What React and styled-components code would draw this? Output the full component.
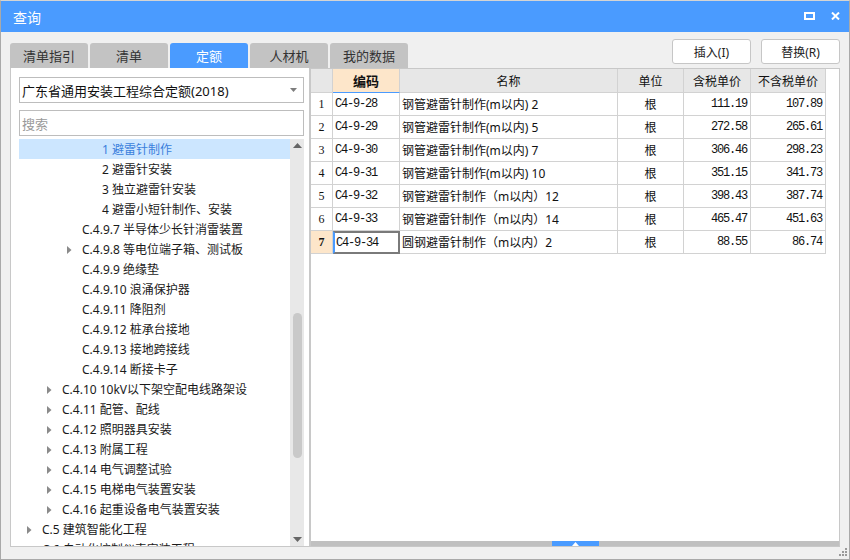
import React from "react"
import styled, { createGlobalStyle, css } from "styled-components"

const GlobalStyle = createGlobalStyle`
    html, body {
        margin: 0;
        padding: 0;
        background: #ffffff;
    }
    body {
        font-family: "Noto Sans", "Noto Sans CJK SC", sans-serif;
    }
    * {
        box-sizing: border-box;
    }
`

const BLUE = "#4a9bff"
const CJK = `"Noto Sans", "Noto Sans CJK SC", sans-serif`
const MONO = `"Liberation Mono", "Noto Sans CJK SC", monospace`

const Window = styled.div`
    width: 850px;
    height: 560px;
    border: 1px solid #a9a9a9;
    border-top-color: #d4d4d4;
    background: #f0f0f0;
    display: flex;
    flex-direction: column;
    overflow: hidden;
`

const TitleBar = styled.div`
    height: 31px;
    flex-shrink: 0;
    background: ${BLUE};
    display: flex;
    align-items: center;
    justify-content: space-between;
    padding: 0 9px 0 12px;
    color: #fff;
    font-family: ${CJK};
    font-size: 14px;
`

const TitleIcons = styled.div`
    display: flex;
    align-items: center;
    gap: 16px;
    margin-top: -1px;
`

const Toolbar = styled.div`
    height: 36px;
    flex-shrink: 0;
    display: flex;
    justify-content: space-between;
    padding: 0 9px;
`

const Tabs = styled.div`
    display: flex;
    align-self: flex-end;
    gap: 2px;
`

const Tab = styled.div`
    width: 78px;
    height: 25px;
    border-radius: 3px 3px 0 0;
    background: ${p => (p.$active ? BLUE : "#c3c3c3")};
    color: ${p => (p.$active ? "#fff" : "#333")};
    font-family: ${CJK};
    font-size: 13px;
    display: flex;
    align-items: center;
    justify-content: center;
`

const Actions = styled.div`
    display: flex;
    gap: 10px;
    margin-top: 7px;
`

const ActionButton = styled.div`
    width: 79px;
    height: 25px;
    border: 1px solid #c6c6c6;
    border-radius: 3px;
    background: #fff;
    color: #222;
    font-family: ${CJK};
    font-size: 12px;
    display: flex;
    align-items: center;
    justify-content: center;
`

const Main = styled.div`
    height: 479px;
    flex-shrink: 0;
    display: flex;
    padding: 0 9px;
`

const LeftPanel = styled.div`
    width: 300px;
    background: #fff;
    border: 1px solid #c8c8c8;
    border-top: none;
    display: flex;
    flex-direction: column;
    padding: 9px 5px 0 8px;
`

const Select = styled.div`
    height: 26px;
    flex-shrink: 0;
    border: 1px solid #bdbdbd;
    display: flex;
    align-items: center;
    justify-content: space-between;
    padding: 0 6px 0 2px;
    font-family: ${CJK};
    font-size: 13px;
    color: #111;
`

const SearchBox = styled.div`
    height: 26px;
    flex-shrink: 0;
    margin-top: 7px;
    border: 1px solid #bdbdbd;
    display: flex;
    align-items: center;
    padding: 0 2px;
    font-family: ${CJK};
    font-size: 13px;
    color: #9a9a9a;
`

const TreeWrap = styled.div`
    flex: 1;
    min-height: 0;
    margin-top: 3px;
    display: flex;
`

const TreeList = styled.div`
    flex: 1;
    overflow: hidden;
`

const TreeRow = styled.div`
    height: 20px;
    display: flex;
    align-items: flex-start;
    padding-top: 2px;
    padding-left: ${p => 8 + p.$level * 20}px;
    background: ${p => (p.$selected ? "#cce6ff" : "transparent")};
    color: ${p => (p.$selected ? "#3a7fdc" : "#1a1a1a")};
    font-family: ${CJK};
    font-size: 12px;
    line-height: 18px;
    white-space: nowrap;
`

const Caret = styled.span`
    width: 15px;
    height: 18px;
    flex-shrink: 0;
    display: flex;
    align-items: center;
`

const ScrollBar = styled.div`
    width: 14px;
    background: #e8e8e8;
    display: flex;
    flex-direction: column;
    align-items: center;
`

const ScrollArrow = styled.div`
    height: 13px;
    flex-shrink: 0;
    display: flex;
    align-items: center;
    justify-content: center;
`

const ScrollTrack = styled.div`
    flex: 1;
    width: 100%;
    display: flex;
    justify-content: center;
`

const ScrollThumb = styled.div`
    width: 9px;
    border-radius: 5px;
    background: #c9c9c9;
`

const RightPanel = styled.div`
    width: 530px;
    background: #fff;
    border: 1px solid #c8c8c8;
    display: flex;
    flex-direction: column;
`

const TableArea = styled.div`
    flex: 1;
`

const COLS = "22px 67px 218px 66px 67px 75px"

const GridRow = styled.div`
    display: grid;
    grid-template-columns: ${COLS};
    width: 515px;
    height: ${p => (p.$head ? 24 : 23)}px;
`

const Cell = styled.div`
    border-right: 1px solid #d2d2d2;
    border-bottom: 1px solid #d2d2d2;
    display: flex;
    align-items: center;
    overflow: hidden;
    white-space: nowrap;
    color: #111;
    justify-content: ${p => p.$align || "flex-start"};
    padding: ${p => (p.$align === "flex-end" ? "0 3px 0 0" : p.$align === "center" ? "0" : "0 0 0 2px")};
    ${p => p.$kind === "mono" && css`
        font-family: ${MONO};
        font-size: 12px;
        letter-spacing: -1.2px;
    `}
    ${p => p.$kind === "text" && css`
        font-family: ${CJK};
        font-size: 12px;
    `}
`

const HeadCell = styled(Cell)`
    background: ${p => (p.$hot ? "#fde6ca" : "#e7e7e7")};
    font-family: ${CJK};
    font-size: ${p => (p.$hot ? 13 : 12)}px;
    font-weight: ${p => (p.$hot ? 700 : 400)};
    justify-content: center;
    padding: 0;
    ${p => p.$hot && css`
        border-bottom-color: ${BLUE};
    `}
`

const NumCell = styled(Cell)`
    justify-content: center;
    padding: 0;
    font-family: "Liberation Serif", serif;
    font-size: 12px;
    ${p => p.$current && css`
        background: #fde6ca;
        font-weight: 700;
    `}
`

const CodeCell = styled(Cell)`
    ${p => p.$current && css`
        border: 2px solid #7a7a7a;
        border-left: 2px solid ${BLUE};
        padding-left: 1px;
    `}
`

const HScroll = styled.div`
    height: 5px;
    flex-shrink: 0;
    background: #c0c0c0;
    display: flex;
    justify-content: center;
`

const HThumb = styled.div`
    width: 47px;
    height: 5px;
    background: ${BLUE};
    display: flex;
    align-items: center;
    justify-content: center;
`

const Footer = styled.div`
    height: 12px;
    flex-shrink: 0;
    display: flex;
    justify-content: flex-end;
    align-items: flex-end;
    padding: 0 2px 3px 0;
`

const RightTriangle = () => (
    <svg width="5" height="8" viewBox="0 0 5 8"><path d="M0 0 L4.5 4 L0 8 Z" fill="#8a8a8a" /></svg>
)

const treeItems = [
    { level: 3, text: "1 避雷针制作", selected: true },
    { level: 3, text: "2 避雷针安装" },
    { level: 3, text: "3 独立避雷针安装" },
    { level: 3, text: "4 避雷小短针制作、安装" },
    { level: 2, text: "C.4.9.7 半导体少长针消雷装置" },
    { level: 2, text: "C.4.9.8 等电位端子箱、测试板", arrow: true },
    { level: 2, text: "C.4.9.9 绝缘垫" },
    { level: 2, text: "C.4.9.10 浪涌保护器" },
    { level: 2, text: "C.4.9.11 降阻剂" },
    { level: 2, text: "C.4.9.12 桩承台接地" },
    { level: 2, text: "C.4.9.13 接地跨接线" },
    { level: 2, text: "C.4.9.14 断接卡子" },
    { level: 1, text: "C.4.10 10kV以下架空配电线路架设", arrow: true },
    { level: 1, text: "C.4.11 配管、配线", arrow: true },
    { level: 1, text: "C.4.12 照明器具安装", arrow: true },
    { level: 1, text: "C.4.13 附属工程", arrow: true },
    { level: 1, text: "C.4.14 电气调整试验", arrow: true },
    { level: 1, text: "C.4.15 电梯电气装置安装", arrow: true },
    { level: 1, text: "C.4.16 起重设备电气装置安装", arrow: true },
    { level: 0, text: "C.5 建筑智能化工程", arrow: true },
    { level: 0, text: "C.6 自动化控制仪表安装工程", arrow: true },
]

const rows = [
    ["C4-9-28", "钢管避雷针制作(m以内) 2", "111.19", "107.89"],
    ["C4-9-29", "钢管避雷针制作(m以内) 5", "272.58", "265.61"],
    ["C4-9-30", "钢管避雷针制作(m以内) 7", "306.46", "298.23"],
    ["C4-9-31", "钢管避雷针制作(m以内) 10", "351.15", "341.73"],
    ["C4-9-32", "钢管避雷针制作（m以内）12", "398.43", "387.74"],
    ["C4-9-33", "钢管避雷针制作（m以内）14", "465.47", "451.63"],
    ["C4-9-34", "圆钢避雷针制作（m以内）2", "88.55", "86.74"],
]

const tabs = ["清单指引", "清单", "定额", "人材机", "我的数据"]

const App = () => {
    return <>
        <GlobalStyle />
        <Window>
            <TitleBar>
                <span>查询</span>
                <TitleIcons>
                    <svg width="11" height="8" viewBox="0 0 11 8">
                        <rect x="1" y="1" width="9" height="6" fill="none" stroke="#fff" strokeWidth="2" />
                    </svg>
                    <svg width="9" height="8" viewBox="0 0 9 8">
                        <path d="M1 0.5 L8 7.5 M8 0.5 L1 7.5" stroke="#fff" strokeWidth="2" />
                    </svg>
                </TitleIcons>
            </TitleBar>

            <Toolbar>
                <Tabs>
                    {tabs.map(t => <Tab key={t} $active={t === "定额"}>{t}</Tab>)}
                </Tabs>
                <Actions>
                    <ActionButton>插入(I)</ActionButton>
                    <ActionButton>替换(R)</ActionButton>
                </Actions>
            </Toolbar>

            <Main>
                <LeftPanel>
                    <Select>
                        <span>广东省通用安装工程综合定额(2018)</span>
                        <svg width="7" height="4" viewBox="0 0 7 4"><path d="M0 0 L7 0 L3.5 4 Z" fill="#7d7d7d" /></svg>
                    </Select>
                    <SearchBox>搜索</SearchBox>
                    <TreeWrap>
                        <TreeList>
                            {treeItems.map(item => (
                                <TreeRow key={item.text} $level={item.level} $selected={item.selected}>
                                    <Caret>{item.arrow && <RightTriangle />}</Caret>
                                    {item.text}
                                </TreeRow>
                            ))}
                        </TreeList>
                        <ScrollBar>
                            <ScrollArrow>
                                <svg width="9" height="5" viewBox="0 0 9 5"><path d="M0 5 L4.5 0 L9 5 Z" fill="#666" /></svg>
                            </ScrollArrow>
                            <ScrollTrack>
                                <ScrollThumb style={{ marginTop: 161, height: 145 }} />
                            </ScrollTrack>
                            <ScrollArrow>
                                <svg width="9" height="5" viewBox="0 0 9 5"><path d="M0 0 L9 0 L4.5 5 Z" fill="#666" /></svg>
                            </ScrollArrow>
                        </ScrollBar>
                    </TreeWrap>
                </LeftPanel>

                <RightPanel>
                    <TableArea>
                        <GridRow $head>
                            <HeadCell />
                            <HeadCell $hot>编码</HeadCell>
                            <HeadCell>名称</HeadCell>
                            <HeadCell>单位</HeadCell>
                            <HeadCell>含税单价</HeadCell>
                            <HeadCell>不含税单价</HeadCell>
                        </GridRow>
                        {rows.map((r, i) => {
                            const current = i === rows.length - 1
                            return (
                                <GridRow key={r[0]}>
                                    <NumCell $current={current}>{i + 1}</NumCell>
                                    <CodeCell $kind="mono" $current={current}>{r[0]}</CodeCell>
                                    <Cell $kind="text">{r[1]}</Cell>
                                    <Cell $kind="text" $align="center">根</Cell>
                                    <Cell $kind="mono" $align="flex-end">{r[2]}</Cell>
                                    <Cell $kind="mono" $align="flex-end">{r[3]}</Cell>
                                </GridRow>
                            )
                        })}
                    </TableArea>
                    <HScroll>
                        <HThumb>
                            <svg width="7" height="4" viewBox="0 0 7 4"><path d="M0 4 L3.5 0 L7 4 Z" fill="#fff" /></svg>
                        </HThumb>
                    </HScroll>
                </RightPanel>
            </Main>

            <Footer>
                <svg width="8" height="8" viewBox="0 0 8 8" fill="#9a9a9a">
                    <rect x="6" y="0" width="2" height="2" />
                    <rect x="3" y="3" width="2" height="2" />
                    <rect x="6" y="3" width="2" height="2" />
                    <rect x="0" y="6" width="2" height="2" />
                    <rect x="3" y="6" width="2" height="2" />
                    <rect x="6" y="6" width="2" height="2" />
                </svg>
            </Footer>
        </Window>
    </>
}

export default App
